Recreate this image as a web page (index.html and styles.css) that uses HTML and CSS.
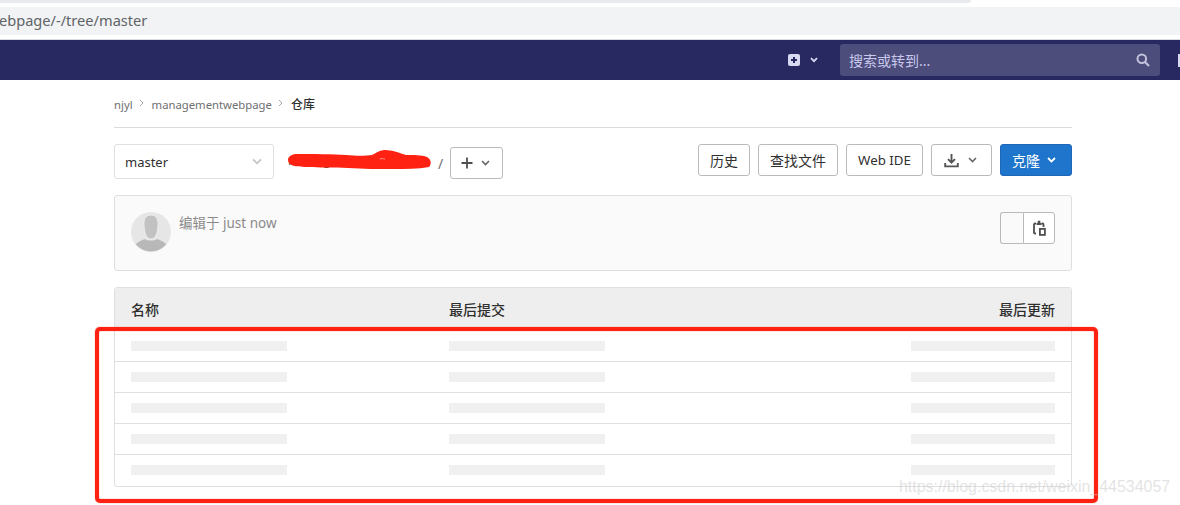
FILE: index.html
```html
<!DOCTYPE html>
<html lang="zh">
<head>
    <meta charset="UTF-8">
    <meta name="viewport" content="width=device-width, initial-scale=1.0">
    <title>仓库</title>
    <link rel="stylesheet" href="styles.css">
</head>
<body>
    <div class="tab-strip"></div>
    <div class="address-bar"><span class="address-text">webpage/-/tree/master</span></div>

    <nav class="navbar">
        <svg class="nav-plus" width="12" height="12" viewBox="0 0 12 12"><rect width="12" height="12" rx="2" fill="#d9d9f2"/><path d="M6 3v6M3 6h6" stroke="#292961" stroke-width="2"/></svg>
        <svg class="nav-chevron" width="8" height="6" viewBox="0 0 8 6"><path d="M1 1.200l3 3 3-3" fill="none" stroke="#d9d9f2" stroke-width="1.800"/></svg>
        <div class="search">
            <span>搜索或转到...</span>
            <svg width="14" height="14" viewBox="0 0 14 14"><circle cx="5.800" cy="5.800" r="4.300" fill="none" stroke="#c3c3dc" stroke-width="2"/><path d="M9 9l4 4" stroke="#c3c3dc" stroke-width="2.200"/></svg>
        </div>
        <div class="nav-edge"></div>
    </nav>

    <main class="content">
        <div class="breadcrumb">
            <span>njyl</span>
            <svg width="5" height="8" viewBox="0 0 5 8"><path d="M1 1l3 3-3 3" fill="none" stroke="#a7a7a7" stroke-width="1"/></svg>
            <span>managementwebpage</span>
            <svg width="5" height="8" viewBox="0 0 5 8"><path d="M1 1l3 3-3 3" fill="none" stroke="#a7a7a7" stroke-width="1"/></svg>
            <strong>仓库</strong>
        </div>

        <div class="toolbar">
            <div class="branch-select">
                <span>master</span>
                <svg width="10" height="7" viewBox="0 0 10 7"><path d="M1 1.300l4 4 4-4" fill="none" stroke="#c4c4c4" stroke-width="1.800"/></svg>
            </div>
            <div class="repo-path">
                <span class="repo-name">managementwebpage</span>
                <svg class="scribble" width="144" height="20" viewBox="0 0 144 20"><path d="M0 9C1 6 4 4 10 4C25 4 45 4 58 5C68 6 78 6 84 5C88 3 92 0 97 0C104 0 112 3 118 5C125 5 134 5 139 7C143 9 144 14 141 17C130 19 118 19 105 19C90 19 75 19 60 18C45 17 35 18 25 17C15 17 5 17 2 14C0 12 0 11 0 9Z" fill="#ff2213"/><path d="M92 9c2-1 3 0 5 0" fill="none" stroke="#ff9a90" stroke-width="1"/></svg>
                <span class="slash">/</span>
                <button class="btn btn-add">
                    <svg width="14" height="14" viewBox="0 0 14 14"><path d="M7 1.500v11M1.500 7h11" stroke="#4f4f4f" stroke-width="1.800"/></svg>
                    <svg width="9" height="6" viewBox="0 0 9 6"><path d="M1 1l3.500 3.500L8 1" fill="none" stroke="#666" stroke-width="1.600"/></svg>
                </button>
            </div>
            <div class="actions">
                <button class="btn">历史</button>
                <button class="btn">查找文件</button>
                <button class="btn btn-ide">Web IDE</button>
                <button class="btn btn-download">
                    <svg width="15" height="15" viewBox="0 0 15 15"><path d="M7.500 1v8.500M4 6.200l3.500 3.500L11 6.200" fill="none" stroke="#555" stroke-width="1.900"/><path d="M1.200 10v3.400h12.600V10" fill="none" stroke="#555" stroke-width="1.900"/></svg>
                    <svg width="9" height="6" viewBox="0 0 9 6"><path d="M1 1l3.500 3.500L8 1" fill="none" stroke="#666" stroke-width="1.600"/></svg>
                </button>
                <button class="btn btn-clone">
                    克隆
                    <svg width="9" height="6" viewBox="0 0 9 6"><path d="M1 1l3.500 3.500L8 1" fill="none" stroke="#fff" stroke-width="1.800"/></svg>
                </button>
            </div>
        </div>

        <div class="commit-box">
            <svg class="avatar" width="40" height="40" viewBox="0 0 40 40">
                <circle cx="20" cy="20" r="20" fill="#e6e6e6"/>
                <clipPath id="avatar-clip"><circle cx="20" cy="20" r="19.500"/></clipPath>
                <g clip-path="url(#avatar-clip)">
                    <path d="M4 40V35C4 31 9 29 14 27C16 29 24 29 26 27C31 29 36 31 36 35V40Z" fill="#b8b8b8"/>
                    <path d="M20 3C14 3 12.500 8 13 14C13.500 20 15 27 20 27C25 27 26.500 20 27 14C27.500 8 26 3 20 3Z" fill="#c2c2c2" stroke="#ececec" stroke-width="1"/>
                </g>
            </svg>
            <div class="commit-text">编辑于 just now</div>
            <div class="commit-actions">
                <button class="sha-empty"></button>
                <button class="sha-copy">
                    <svg width="13" height="16" viewBox="0 0 13 16"><path d="M3 13.500H2a1 1 0 0 1-1-1V4.500a1 1 0 0 1 1-1h1M8.500 3.500h1a1 1 0 0 1 1 1V7" fill="none" stroke="#4f4f4f" stroke-width="1.800"/><path d="M3.500 5V3h1.200V.8h2.600V3h1.200V5Z" fill="#4f4f4f"/><rect x="6.900" y="8.900" width="5" height="6" fill="none" stroke="#4f4f4f" stroke-width="1.800"/></svg>
                </button>
            </div>
        </div>

        <div class="file-table">
            <div class="table-head">
                <span>名称</span>
                <span>最后提交</span>
                <span>最后更新</span>
            </div>
            <div class="table-row"><i class="bar"></i><i class="bar"></i><i class="bar bar-short"></i></div>
            <div class="table-row"><i class="bar"></i><i class="bar"></i><i class="bar bar-short"></i></div>
            <div class="table-row"><i class="bar"></i><i class="bar"></i><i class="bar bar-short"></i></div>
            <div class="table-row"><i class="bar"></i><i class="bar"></i><i class="bar bar-short"></i></div>
            <div class="table-row"><i class="bar"></i><i class="bar"></i><i class="bar bar-short"></i></div>
        </div>
    </main>

    <div class="red-frame"></div>
    <div class="watermark">https://blog.csdn.net/weixin_44534057</div>
</body>
</html>
```

FILE: styles.css
```css
html, body {
    height: 505px;
    overflow: hidden;
}

body {
    font-family: "Noto Sans", "Noto Sans CJK SC", sans-serif;
    background-color: #fff;
    color: #303030;
    margin: 0;
    padding: 0;
    position: relative;
}

/* browser chrome */
.tab-strip {
    width: 971px;
    height: 3px;
    background-color: #e8eaed;
    border-bottom-right-radius: 4px;
}

.address-bar {
    height: 28px;
    margin-top: 4px;
    background-color: #f1f3f4;
    overflow: hidden;
    line-height: 26px;
    font-size: 14.600px;
    color: #5f6368;
    white-space: nowrap;
}

.address-text {
    margin-left: -12.500px;
}

/* gitlab nav */
.navbar {
    height: 40px;
    margin-top: 5px;
    box-shadow: 0 -1px 0 #dcdce4;
    background-color: #292961;
    display: flex;
    align-items: center;
    overflow: hidden;
    padding-left: 788px;
}

.nav-plus {
    flex: none;
}

.nav-chevron {
    flex: none;
    margin-left: 10px;
}

.search {
    flex: none;
    width: 320px;
    height: 32px;
    margin-left: 22px;
    padding: 0 10px 0 9px;
    box-sizing: border-box;
    background-color: #4d4d7c;
    border-radius: 3px;
    display: flex;
    align-items: center;
    justify-content: space-between;
    font-size: 14px;
    color: #c9c9ee;
}

.nav-edge {
    flex: none;
    width: 12px;
    height: 13px;
    margin-left: 18px;
    background-color: #d9d9f2;
}

/* page */
.content {
    width: 958px;
    margin-left: 114px;
}

.breadcrumb {
    height: 46px;
    padding-top: 1px;
    border-bottom: 1px solid #dcdcdc;
    display: flex;
    align-items: center;
    font-size: 11.300px;
    color: #707070;
}

.breadcrumb svg {
    margin: 0 8px 2px 6px;
}

.breadcrumb strong {
    font-size: 12px;
    font-weight: 500;
    color: #303030;
}

.toolbar {
    display: flex;
    align-items: flex-start;
    margin-top: 16px;
}

.branch-select {
    width: 160px;
    height: 35px;
    box-sizing: border-box;
    padding: 0 11px 0 10px;
    border: 1px solid #dfdfdf;
    border-radius: 3px;
    display: flex;
    align-items: center;
    justify-content: space-between;
    font-size: 13px;
}

.repo-path {
    position: relative;
    display: flex;
    align-items: center;
    height: 32px;
    margin: 3px 0 0 14px;
    font-size: 14px;
}

.repo-name {
    width: 144px;
    margin-bottom: 7px;
    overflow: hidden;
    font-size: 13px;
    color: #4f4f4f;
}

.scribble {
    position: absolute;
    left: 0;
    top: 3px;
}

.slash {
    margin: 0 7px 0 6px;
    color: #707070;
}

.btn {
    height: 32px;
    padding: 0 11px;
    font-family: inherit;
    font-size: 14px;
    color: #303030;
    background-color: #fff;
    border: 1px solid #bababa;
    border-radius: 3px;
    display: flex;
    align-items: center;
}

.btn-add {
    width: 53px;
    padding: 0 12px 0 9px;
    justify-content: space-between;
}

.actions {
    margin-left: auto;
    display: flex;
    gap: 8px;
}

.btn-ide {
    width: 77px;
    padding: 0;
    justify-content: center;
    font-size: 13.300px;
}

.btn-download {
    width: 61px;
    padding: 0 14px 0 12px;
    justify-content: space-between;
}

.btn-clone {
    width: 72px;
    padding: 0 15px 0 11px;
    justify-content: space-between;
    color: #fff;
    background-color: #1f75cb;
    border-color: #1b69b6;
}

.commit-box {
    height: 76px;
    margin-top: 16px;
    box-sizing: border-box;
    padding: 16px 16px 0;
    border: 1px solid #dfdfdf;
    border-radius: 3px;
    background-color: #fafafa;
    display: flex;
    align-items: flex-start;
}

.avatar {
    flex: none;
}

.commit-text {
    margin-left: 8px;
    font-size: 13.500px;
    line-height: 22px;
    color: #8a8a8a;
}

.commit-actions {
    margin-left: auto;
    display: flex;
}

.sha-empty, .sha-copy {
    height: 32px;
    padding: 0;
    border: 1px solid #bababa;
    background-color: #fafafa;
}

.sha-empty {
    width: 23px;
    border-right: 0;
    border-radius: 3px 0 0 3px;
}

.sha-copy {
    width: 32px;
    background-color: #fff;
    border-radius: 0 3px 3px 0;
    display: flex;
    align-items: center;
    justify-content: center;
}

.file-table {
    margin-top: 16px;
    border: 1px solid #dfdfdf;
    border-radius: 3px;
}

.table-head, .table-row {
    display: grid;
    grid-template-columns: 318px 1fr auto;
    padding: 0 16px;
}

.table-head {
    height: 43px;
    box-sizing: border-box;
    padding-top: 11px;
    background-color: #eee;
    font-size: 14px;
    font-weight: 500;
    line-height: 22px;
    color: #2e2e2e;
}

.table-row {
    padding-top: 10px;
    padding-bottom: 10px;
    border-bottom: 1px solid #dfdfdf;
}

.table-row:last-child {
    padding-bottom: 11px;
    border-bottom: 0;
}

.bar {
    display: block;
    width: 156px;
    height: 10px;
    background-color: #f0f0f0;
}

.bar-short {
    width: 144px;
}

/* annotation drawn on top of the screenshot */
.red-frame {
    position: absolute;
    left: 95px;
    top: 327px;
    width: 995px;
    height: 168px;
    border: 4px solid #ff2213;
    border-radius: 5px;
    box-shadow: 0 0 1px #ff2213, inset 0 0 1px #ff2213;
}

.watermark {
    position: absolute;
    left: 899px;
    top: 477px;
    font-family: "Liberation Sans", sans-serif;
    font-size: 15.950px;
    line-height: 20px;
    color: rgba(200, 200, 200, 0.5);
    white-space: nowrap;
}
```
